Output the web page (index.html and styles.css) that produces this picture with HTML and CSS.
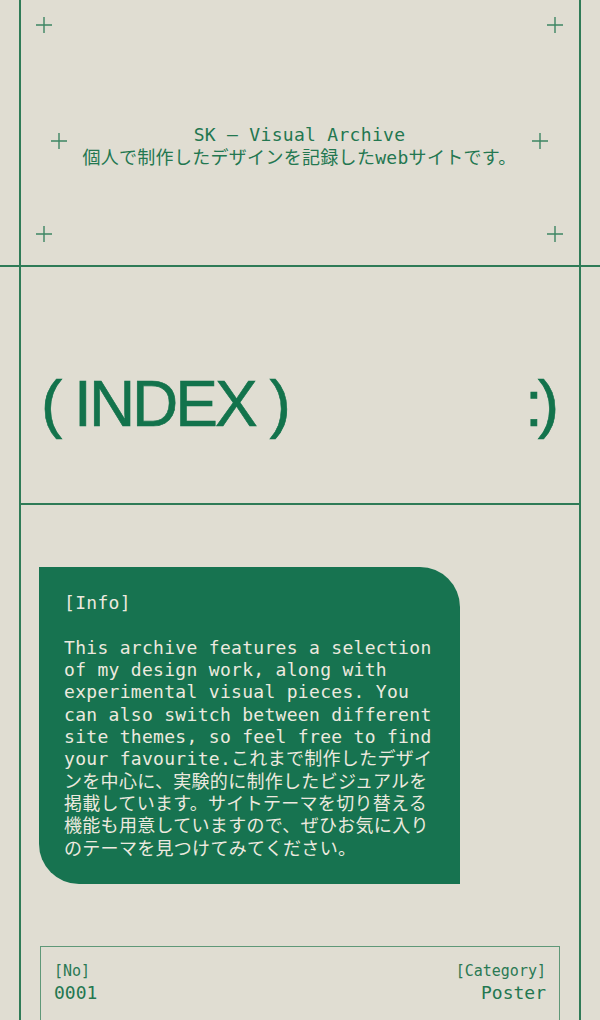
FILE: index.html
```html
<!DOCTYPE html>
<html lang="ja">
<head>
<meta charset="utf-8">
<title>SK — Visual Archive</title>
<link rel="stylesheet" href="styles.css">
</head>
<body>
<header class="header">
  <div class="frame header-frame">
    <div class="row row-top">
      <svg class="plus" viewBox="0 0 16 16"><path d="M8 0V16M0 8H16"/></svg>
      <svg class="plus" viewBox="0 0 16 16"><path d="M8 0V16M0 8H16"/></svg>
    </div>
    <div class="row row-mid">
      <svg class="plus plus-mid" viewBox="0 0 16 16"><path d="M8 0V16M0 8H16"/></svg>
      <p class="site-title">SK — Visual Archive<br>個人で制作したデザインを記録したwebサイトです。</p>
      <svg class="plus plus-mid" viewBox="0 0 16 16"><path d="M8 0V16M0 8H16"/></svg>
    </div>
    <div class="row row-bottom">
      <svg class="plus" viewBox="0 0 16 16"><path d="M8 0V16M0 8H16"/></svg>
      <svg class="plus" viewBox="0 0 16 16"><path d="M8 0V16M0 8H16"/></svg>
    </div>
  </div>
</header>
<main class="frame">
  <section class="index-bar">
    <h1 class="index-title">( INDEX )</h1>
    <span class="smile">:)</span>
  </section>
  <section class="content">
    <div class="info-card">
      <p class="info-label">[Info]</p>
      <p class="info-text">This archive features a selection of my design work, along with experimental visual pieces. You can also switch between different site themes, so feel free to find your favourite.これまで制作したデザインを中心に、実験的に制作したビジュアルを掲載しています。サイトテーマを切り替える機能も用意していますので、ぜひお気に入りのテーマを見つけてみてください。</p>
    </div>
    <div class="work">
      <div class="work-col">
        <span class="work-label">[No]</span>
        <span class="work-value">0001</span>
      </div>
      <div class="work-col work-col-right">
        <span class="work-label">[Category]</span>
        <span class="work-value">Poster</span>
      </div>
    </div>
  </section>
</main>
</body>
</html>
```

FILE: styles.css
```css
html, body {
  margin: 0;
  padding: 0;
  background: #e0ddd2;
}
body {
  color: #17744f;
  font-family: "DejaVu Sans Mono", "Noto Sans CJK JP", monospace;
  overflow: hidden;
  height: 1020px;
}
p, h1 {
  margin: 0;
}
.frame {
  margin: 0 19px;
  border-left: 2px solid #2f7b57;
  border-right: 2px solid #2f7b57;
}
.header {
  border-bottom: 2px solid #2f7b57;
}
.header-frame {
  height: 265px;
  box-sizing: border-box;
  padding: 17px 0 23px;
  display: flex;
  flex-direction: column;
}
.row {
  display: flex;
  justify-content: space-between;
  align-items: flex-start;
}
.row-top,
.row-bottom {
  padding: 0 16px 0 15px;
  height: 16px;
}
.row-mid {
  margin-top: 90px;
  padding: 0 31px 0 30px;
}
.row-bottom {
  margin-top: 57px;
}
.plus {
  width: 16px;
  height: 16px;
  flex: none;
  display: block;
}
.plus path {
  stroke: #3d8563;
  stroke-width: 1.4;
  fill: none;
}
.plus-mid {
  margin-top: 10px;
}
.site-title {
  flex: 1;
  text-align: center;
  font-size: 18px;
  line-height: 23px;
  letter-spacing: 0.3px;
  color: #237750;
}
.index-bar {
  height: 238px;
  box-sizing: border-box;
  padding: 105px 25px 0 20px;
  border-bottom: 2px solid #2f7b57;
  display: flex;
  justify-content: space-between;
  align-items: flex-start;
  font-family: "Liberation Sans", Arial, sans-serif;
  font-size: 64px;
  line-height: 64px;
  letter-spacing: -3px;
  color: #13734c;
  -webkit-text-stroke: 0.6px #13734c;
}
.index-title {
  font-size: 64px;
  font-weight: normal;
}
.smile {
  display: block;
  letter-spacing: -5px;
}
.content {
  padding: 62px 0 0 18px;
}
.info-card {
  width: 421px;
  box-sizing: border-box;
  background: #177350;
  color: #ece9df;
  border-radius: 0 40px 0 40px;
  padding: 25px 22px 24px 25px;
  font-size: 18px;
  line-height: 22.35px;
  letter-spacing: 0.3px;
}
.info-label {
  margin-bottom: 22.35px;
}
.info-text {
  line-break: strict;
}
.work {
  margin: 62px 0 0 1px;
  width: 520px;
  height: 130px;
  box-sizing: border-box;
  border: 1.5px solid #5f9878;
  padding: 14px 13px;
  display: flex;
  justify-content: space-between;
  align-items: flex-start;
}
.work-col {
  display: flex;
  flex-direction: column;
}
.work-col-right {
  align-items: flex-end;
}
.work-label {
  font-size: 15px;
  line-height: 20px;
  color: #2a7954;
}
.work-value {
  font-size: 18px;
  line-height: 24px;
  color: #237750;
}
```
